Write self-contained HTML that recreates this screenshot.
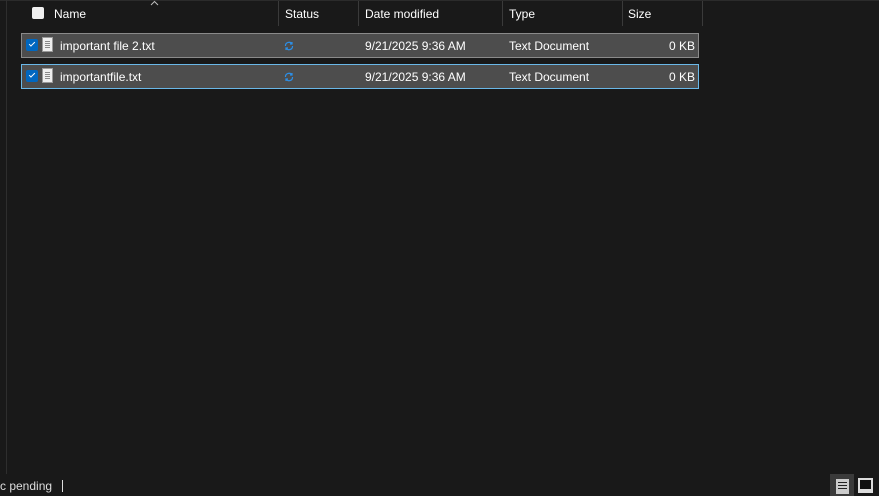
<!DOCTYPE html><html><head><style>
body{margin:0;width:879px;height:496px;background:#191919;font-family:"Liberation Sans",sans-serif;font-size:12px;color:#fff;position:relative;overflow:hidden}
.a{position:absolute}
.hd{color:#fff;top:7px}
.sep{width:1px;height:25px;background:#3a3a3a;top:1px}
.row{left:21px;width:676px;height:23px;background:#4d4d4d;border:1px solid #8a8a8a}
.row span{position:absolute;top:5px}
.cb{width:12px;height:12px;background:#0067c0;border-radius:2px;left:4px;top:5px}
.cb:after{content:"";position:absolute;left:3px;top:3px;width:5px;height:2px;border-left:1px solid #fff;border-bottom:1px solid #fff;transform:rotate(-45deg)}
.doc{left:20px;top:3px;width:11px;height:15px;background:#eee;border:1px solid #999;box-sizing:border-box}
.doc:before{content:"";position:absolute;left:2px;right:2px;top:3px;height:8px;background:repeating-linear-gradient(#888 0 1px,transparent 1px 2px)}
.st{left:262px;top:4px;width:10px;height:10px}
</style></head><body>
<div class="a" style="left:0;top:0;width:879px;height:1px;background:#2b2b2b"></div>
<div class="a" style="left:6px;top:0;width:1px;height:474px;background:#2e2e2e"></div>
<div class="a" style="left:32px;top:7px;width:12px;height:12px;background:#f0f0f0;border-radius:2px"></div>
<svg class="a" style="left:150px;top:0" width="9" height="6"><path d="M1 5L4.5 1.5L8 5" stroke="#bbb" fill="none"/></svg>
<div class="a hd" style="left:54px">Name</div>
<div class="a sep" style="left:278px"></div>
<div class="a hd" style="left:285px">Status</div>
<div class="a sep" style="left:358px"></div>
<div class="a hd" style="left:365px">Date modified</div>
<div class="a sep" style="left:502px"></div>
<div class="a hd" style="left:509px">Type</div>
<div class="a sep" style="left:622px"></div>
<div class="a hd" style="left:628px">Size</div>
<div class="a sep" style="left:702px"></div>

<div class="a row" style="top:33px"><div class="a cb"></div><div class="a doc"></div>
<span style="left:38px">important file 2.txt</span>
<svg class="a st" viewBox="0 0 10 10" style="top:7px"><path d="M1.5 5A3.5 3.5 0 0 1 8 3M8.5 5A3.5 3.5 0 0 1 2 7M8 1V3H6M2 9V7H4" stroke="#2b8fe8" fill="none" stroke-width="1.2"/></svg>
<span style="left:343px">9/21/2025 9:36 AM</span><span style="left:487px">Text Document</span><span style="right:3px">0 KB</span></div>
<div class="a row" style="top:64px;border-color:#6ab8e8"><div class="a cb"></div><div class="a doc"></div>
<span style="left:38px">importantfile.txt</span>
<svg class="a st" viewBox="0 0 10 10" style="top:7px"><path d="M1.5 5A3.5 3.5 0 0 1 8 3M8.5 5A3.5 3.5 0 0 1 2 7M8 1V3H6M2 9V7H4" stroke="#2b8fe8" fill="none" stroke-width="1.2"/></svg>
<span style="left:343px">9/21/2025 9:36 AM</span><span style="left:487px">Text Document</span><span style="right:3px">0 KB</span></div>

<div class="a" style="left:0;top:479px;color:#ddd">c pending</div>
<div class="a" style="left:62px;top:480px;width:1px;height:12px;background:#ddd"></div>
<div class="a" style="left:830px;top:474px;width:24px;height:22px;background:#3a3a3a"></div>
<div class="a" style="left:836px;top:479px;width:13px;height:15px;background:#ccc"></div>
<div class="a" style="left:838px;top:482px;width:9px;height:9px;background:repeating-linear-gradient(#222 0 1px,transparent 1px 3px)"></div>
<div class="a" style="left:858px;top:478px;width:15px;height:15px;border:2px solid #ddd;border-bottom-width:4px;box-sizing:border-box;background:#111"></div>
</body></html>
